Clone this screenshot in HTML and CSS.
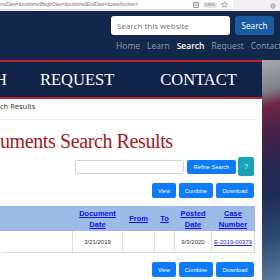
FILE: index.html
```html
<!DOCTYPE html>
<html lang="en">
<head>
<meta charset="utf-8">
<title>Documents Search Results</title>
<link rel="stylesheet" href="styles.css">
</head>
<body>
<div class="urlbar">
  <div class="urlfield">
    <span class="url">endDate=&amp;publishedBeginDate=&amp;publishedEndDate=&amp;caseNumber=</span>
    <span class="urlicons">
      <svg class="ico" width="6" height="6" viewBox="0 0 6 6"><rect x="0.5" y="0.5" width="5" height="5" rx="0.5" fill="none" stroke="#777" stroke-width="0.8"/><path d="M1.5 2h3M1.5 3.3h3" stroke="#777" stroke-width="0.6"/></svg>
      <span class="zoom">170%</span>
      <svg class="ico" width="7" height="7" viewBox="0 0 10 10"><path d="M5 0.8l1.2 2.8 3 .3-2.3 2 .7 3L5 7.3 2.4 8.9l.7-3L.8 3.9l3-.3z" fill="none" stroke="#666" stroke-width="0.8"/></svg>
    </span>
  </div>
  <div class="tools">
    <svg width="6" height="6" viewBox="0 0 10 10"><circle cx="5" cy="5" r="3.5" fill="none" stroke="#888" stroke-width="1.4"/><circle cx="5" cy="5" r="1.2" fill="#888"/></svg>
  </div>
</div>
<header class="top">
  <div class="searchrow">
    <input class="sinput" type="text" placeholder="Search this website">
    <button class="sbtn">Search</button>
  </div>
  <nav class="links">
    <a>Home</a><a>Learn</a><a class="on">Search</a><a>Request</a><a>Contact</a>
  </nav>
</header>
<div class="below">
  <div class="main">
    <div class="red"></div>
    <div class="band">
      <span class="cut">SEARCH</span>
      <span class="b-req">REQUEST</span>
      <span class="b-con">CONTACT</span>
    </div>
    <div class="red"></div>
    <div class="content">
      <div class="crumb">ch Results</div>
      <h1 class="title">uments Search Results</h1>
      <div class="srow">
        <input class="rinput" type="text">
        <button class="btn refine">Refine Search</button>
        <button class="help">?</button>
      </div>
      <div class="brow">
        <button class="btn w-view">View</button>
        <button class="btn w-comb">Combine</button>
        <button class="btn w-down">Download</button>
      </div>
      <table class="res">
        <colgroup>
          <col class="c1"><col class="c2"><col class="c3"><col class="c4"><col class="c5"><col class="c6">
        </colgroup>
        <thead>
          <tr>
            <th></th>
            <th><a>Document Date</a></th>
            <th><a>From</a></th>
            <th><a>To</a></th>
            <th><a>Posted Date</a></th>
            <th><a>Case Number</a></th>
          </tr>
        </thead>
        <tbody>
          <tr>
            <td></td>
            <td>3/21/2019</td>
            <td></td>
            <td></td>
            <td>9/3/2020</td>
            <td><a class="case">E-2019-00379</a></td>
          </tr>
        </tbody>
      </table>
      <div class="brow bottom">
        <button class="btn w-view">View</button>
        <button class="btn w-comb">Combine</button>
        <button class="btn w-down">Download</button>
      </div>
    </div>
  </div>
  <div class="side"></div>
</div>
</body>
</html>
```

FILE: styles.css
```css
html, body {
  margin: 0;
  padding: 0;
}
body {
  width: 280px;
  height: 280px;
  overflow: hidden;
  font-family: "Liberation Sans", Arial, sans-serif;
  background: #fff;
}

/* browser url strip */
.urlbar {
  height: 11px;
  display: flex;
  background: #f0f0f4;
}
.urlfield {
  width: 233px;
  height: 10px;
  background: #fff;
  border-bottom: 1px solid #d8d8dc;
  display: flex;
  align-items: center;
  justify-content: space-between;
  padding-right: 5px;
  box-sizing: border-box;
}
.url {
  font-size: 4.5px;
  color: #777;
  white-space: nowrap;
  overflow: hidden;
  margin-left: -1px;
}
.urlicons {
  display: flex;
  align-items: center;
  gap: 4px;
}
.zoom {
  font-size: 4px;
  color: #555;
  background: #e6e6ea;
  border-radius: 2px;
  padding: 0.5px 2px;
}
.tools {
  flex: 1;
  display: flex;
  justify-content: flex-end;
  align-items: center;
  padding-right: 4px;
}

/* header */
.top {
  height: 49px;
  background: #13294b;
  padding-top: 5px;
  box-sizing: border-box;
}
.searchrow {
  display: flex;
  justify-content: flex-end;
  gap: 5px;
  padding-right: 6px;
}
.sinput {
  width: 119px;
  height: 19px;
  box-sizing: border-box;
  border: none;
  border-radius: 3px;
  padding: 0 6px;
  font-family: "Open Sans", sans-serif;
  font-size: 8px;
  background: #fff;
}
.sinput::placeholder {
  color: #6c757d;
}
.sbtn {
  width: 39px;
  height: 19px;
  border: none;
  border-radius: 3px;
  background: #1c5ba0;
  color: #fff;
  font-family: "Open Sans", sans-serif;
  font-size: 8.2px;
  padding: 0;
}
.links {
  display: flex;
  gap: 7px;
  margin: 6px 0 0 116px;
  white-space: nowrap;
  font-family: "Open Sans", sans-serif;
  font-size: 8.5px;
  line-height: 10px;
  color: #8c9bb2;
}
.links .on {
  color: #fff;
  font-weight: 600;
}

/* below header */
.below {
  display: flex;
  height: 220px;
}
.main {
  width: 262px;
  display: flex;
  flex-direction: column;
}
.side {
  flex: 1;
  background: linear-gradient(165deg, #a6a8ae 0%, #80828b 14%, #6e2744 21%, #4a2248 32%, #282650 48%, #1f2d55 62%, #2e4a70 80%, #5c7ca2 100%);
}
.red {
  height: 2px;
  background: #be1e2d;
}
.band {
  height: 35px;
  background: #0f2349;
  display: flex;
  align-items: center;
  font-family: "Liberation Serif", "Times New Roman", serif;
  font-size: 16.5px;
  color: #fff;
  white-space: nowrap;
}
.cut {
  width: 7px;
  overflow: hidden;
  direction: rtl;
}
.b-req {
  margin-left: 33px;
}
.b-con {
  margin-left: 46px;
}

.content {
  flex: 1;
  background: #fff;
  padding-right: 7px;
}
.crumb {
  height: 21px;
  box-sizing: border-box;
  padding-top: 2px;
  font-family: "Open Sans", sans-serif;
  font-size: 7.5px;
  line-height: 10px;
  color: #333;
  border-bottom: 1px solid #ececec;
}
.title {
  margin: 9px 0 0;
  font-family: "Liberation Serif", "Times New Roman", serif;
  font-weight: normal;
  font-size: 20px;
  line-height: 24px;
  letter-spacing: -0.4px;
  color: #a3171f;
  white-space: nowrap;
}
.srow {
  margin-top: 4px;
  height: 19px;
  display: flex;
  align-items: center;
  justify-content: flex-end;
  padding-right: 1px;
}
.rinput {
  width: 109px;
  height: 14px;
  box-sizing: border-box;
  border: 1px solid #cfd4da;
  border-radius: 2px;
  margin-right: 3px;
}
.btn {
  height: 15px;
  border: none;
  border-radius: 2px;
  background: #0d7bfb;
  color: #fff;
  font-family: "Liberation Sans", Arial, sans-serif;
  font-size: 5.6px;
  padding: 0;
}
.refine {
  width: 49px;
  height: 14px;
  margin-right: 2px;
}
.help {
  width: 16px;
  height: 19px;
  border: none;
  border-radius: 2px;
  background: #17a2b8;
  color: #e6f6f9;
  font-family: "Liberation Sans", Arial, sans-serif;
  font-size: 8px;
  padding: 0;
}
.brow {
  margin-top: 7px;
  display: flex;
  justify-content: flex-end;
  gap: 3px;
  padding-right: 1px;
}
.brow.bottom {
  margin-top: 9px;
}
.w-view { width: 24px; }
.w-comb { width: 34px; }
.w-down { width: 38px; }

.res {
  margin-top: 8px;
  width: 254px;
  border-collapse: collapse;
  table-layout: fixed;
}
.c1 { width: 72px; }
.c2 { width: 50px; }
.c3 { width: 32px; }
.c4 { width: 20px; }
.c5 { width: 37px; }
.c6 { width: 43px; }
.res th {
  height: 23px;
  padding: 0;
  border: 1px solid #9dbbe6;
  background: #9dbbe6;
  font-size: 7.5px;
  line-height: 11px;
  font-weight: bold;
  text-align: center;
  vertical-align: middle;
}
.res th a {
  color: #1010ee;
  text-decoration: underline;
}
.res td {
  height: 21px;
  padding: 0;
  border: 1px solid #dedede;
  border-top: none;
  font-size: 6px;
  color: #333;
  text-align: center;
  vertical-align: middle;
}
.res td:first-child {
  border-left: none;
}
.case {
  color: #2222dd;
  text-decoration: underline;
}
```
